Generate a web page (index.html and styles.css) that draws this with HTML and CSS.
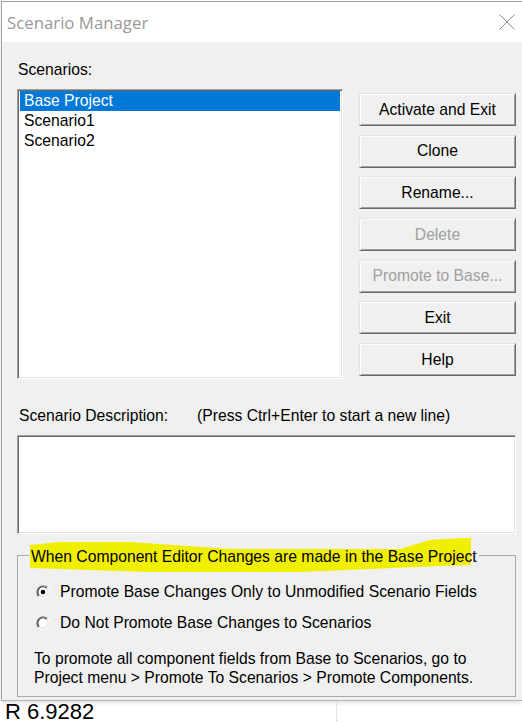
FILE: index.html
```html
<!DOCTYPE html>
<html lang="en">
  <head>
    <meta charset="UTF-8" />
    <title>Scenario Manager</title>
    <link rel="stylesheet" href="styles.css">
  </head>
  <body>

    <div class="window">
      <div class="titlebar">
        <span class="title">Scenario Manager</span>
        <svg class="close" width="16" height="16" viewBox="0 0 16 16">
          <path d="M0.5 0.5 L15.5 15.5 M15.5 0.5 L0.5 15.5" stroke="#8c8c8c" stroke-width="1" fill="none"/>
        </svg>
      </div>

      <div class="content">
        <div class="label">Scenarios:</div>

        <div class="top-row">
          <ul class="listbox">
            <li class="selected">Base Project</li>
            <li>Scenario1</li>
            <li>Scenario2</li>
          </ul>

          <div class="buttons">
            <button class="btn">Activate and Exit</button>
            <button class="btn">Clone</button>
            <button class="btn">Rename...</button>
            <button class="btn" disabled>Delete</button>
            <button class="btn" disabled>Promote to Base...</button>
            <button class="btn">Exit</button>
            <button class="btn">Help</button>
          </div>
        </div>

        <div class="desc-label">
          <span class="desc-name">Scenario Description:</span>
          <span>(Press Ctrl+Enter to start a new line)</span>
        </div>
        <div class="textbox"></div>

        <fieldset class="group">
          <legend class="marked">When Component Editor Changes are made in the Base Project</legend>

          <div class="radio-row">
            <svg class="radio" width="14" height="14" viewBox="0 0 14 14">
              <circle cx="7" cy="7" r="6.3" fill="#fff"/>
              <path d="M2.55 11.45 A6.3 6.3 0 0 1 11.45 2.55" stroke="#8a8a8a" stroke-width="1.4" fill="none"/>
              <path d="M3.3 10.7 A5.2 5.2 0 0 1 10.7 3.3" stroke="#404040" stroke-width="1.2" fill="none"/>
              <path d="M11.45 2.55 A6.3 6.3 0 0 1 2.55 11.45" stroke="#fff" stroke-width="1.4" fill="none"/>
              <path d="M10.7 3.3 A5.2 5.2 0 0 1 3.3 10.7" stroke="#dcdcdc" stroke-width="1.2" fill="none"/>
              <circle cx="7" cy="7" r="2.3" fill="#000"/>
            </svg>
            <span>Promote Base Changes Only to Unmodified Scenario Fields</span>
          </div>

          <div class="radio-row">
            <svg class="radio" width="14" height="14" viewBox="0 0 14 14">
              <circle cx="7" cy="7" r="6.3" fill="#fff"/>
              <path d="M2.55 11.45 A6.3 6.3 0 0 1 11.45 2.55" stroke="#8a8a8a" stroke-width="1.4" fill="none"/>
              <path d="M3.3 10.7 A5.2 5.2 0 0 1 10.7 3.3" stroke="#404040" stroke-width="1.2" fill="none"/>
              <path d="M11.45 2.55 A6.3 6.3 0 0 1 2.55 11.45" stroke="#fff" stroke-width="1.4" fill="none"/>
              <path d="M10.7 3.3 A5.2 5.2 0 0 1 3.3 10.7" stroke="#dcdcdc" stroke-width="1.2" fill="none"/>
            </svg>
            <span>Do Not Promote Base Changes to Scenarios</span>
          </div>

          <p class="note">To promote all component fields from Base to Scenarios, go to<br>Project menu &gt; Promote To Scenarios &gt; Promote Components.</p>
        </fieldset>
      </div>
    </div>

    <div class="behind">
      <span class="value">R 6.9282</span>
      <span class="divider"></span>
    </div>

  </body>
</html>
```

FILE: styles.css
```css
* {
  box-sizing: border-box;
  margin: 0;
  padding: 0;
}
body {
  font-family: "Liberation Sans", Arial, sans-serif;
  font-size: 15.7px;
  color: #000;
  background: #fff;
  width: 522px;
  height: 723px;
  overflow: hidden;
  padding-top: 1px;
}
.window {
  border-top: 1px solid #a0a0a0;
  border-left: 1px solid #a0a0a0;
  border-bottom: 1px solid #b4b4b4;
  margin-left: 1px;
  background: #f0f0f0;
  box-shadow: 0 2px 4px rgba(0, 0, 0, 0.12);
}
.titlebar {
  height: 40px;
  background: #fff;
  display: flex;
  align-items: center;
  justify-content: space-between;
  padding: 0 7px 0 5px;
}
.title {
  font-family: "Open Sans", "Noto Sans", sans-serif;
  font-size: 16.8px;
  color: #999;
}
.close {
  display: block;
}
.content {
  padding: 19px 5px 3px 15px;
}
.label {
  line-height: 18px;
  margin-bottom: 10px;
  padding-left: 1px;
}
.top-row {
  display: flex;
  gap: 16px;
}
.listbox {
  list-style: none;
  width: 326px;
  height: 290px;
  background: #fff;
  border: 1px solid;
  border-color: #a0a0a0 #fff #fff #a0a0a0;
  box-shadow: inset 1px 1px 0 #696969, inset -1px -1px 0 #e3e3e3;
  padding: 1px 2px;
}
.listbox li {
  height: 20px;
  line-height: 20px;
  padding-left: 4px;
}
.listbox li.selected {
  background: #0078d7;
  color: #fff;
}
.buttons {
  display: flex;
  flex-direction: column;
  gap: 8.7px;
  padding-top: 4px;
}
.btn {
  width: 157px;
  height: 33px;
  font-family: inherit;
  font-size: 15.7px;
  color: #000;
  background: #f0f0f0;
  border: 1px solid;
  border-color: #e3e3e3 #696969 #696969 #e3e3e3;
  box-shadow: inset 1px 1px 0 #fff, inset -1px -1px 0 #a0a0a0;
}
.btn:disabled {
  color: #a0a0a0;
}
.desc-label {
  display: flex;
  line-height: 18px;
  margin-top: 28px;
  padding-left: 2px;
}
.desc-name {
  width: 178px;
}
.textbox {
  height: 99px;
  width: 499px;
  margin-top: 10px;
  background: #fff;
  border: 1px solid;
  border-color: #a0a0a0 #fff #fff #a0a0a0;
  box-shadow: inset 1px 1px 0 #696969, inset -1px -1px 0 #e3e3e3;
}
.group {
  width: 499px;
  margin-top: 4px;
  border: 1px solid #a9a9a9;
  padding: 10px 10px 9px 16px;
}
.marked {
  position: relative;
  z-index: 0;
  margin-left: -5px;
  padding: 10px 2px 6px 2px;
  line-height: 18px;
}
/* the yellow marker stroke drawn over the legend */
.marked::before {
  content: "";
  position: absolute;
  inset: 0;
  z-index: -1;
  background: #f1ef00;
  clip-path: polygon(1px 7px, 31px 4px, 101px 4px, 201px 11px, 371px 11px, 401px 2px, 433px 0, 442px 0, 442px 27px, 411px 28px, 271px 34px, 121px 34px, 31px 31px, 1px 30px);
}
.radio-row {
  display: flex;
  align-items: center;
  gap: 10px;
  height: 20px;
  padding-left: 2px;
  margin-bottom: 11px;
}
.radio {
  display: block;
  flex-shrink: 0;
}
.note {
  line-height: 19px;
  margin-top: 16px;
}
.behind {
  display: flex;
  height: 19px;
  margin-top: 1px;
}
.value {
  font-size: 22px;
  line-height: 19px;
  padding-left: 5px;
  width: 336px;
}
.divider {
  border-left: 1px dotted #c8c8c8;
  height: 19px;
}
```
